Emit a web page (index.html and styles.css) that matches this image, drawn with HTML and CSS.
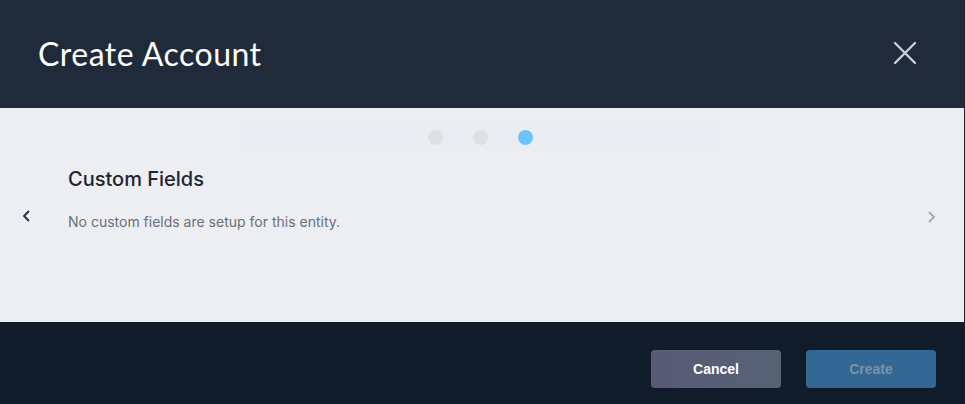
FILE: index.html
```html
<!DOCTYPE html>
<html lang="en">
<head>
<meta charset="UTF-8" />
<title>Create Account</title>
<link rel="stylesheet" href="styles.css">
</head>
<body>
  <div class="modal">
    <!-- Header -->
    <div class="modal-header">
      <h1 class="modal-title">Create Account</h1>
      <button class="close-button" aria-label="Close">
        <svg width="24" height="24" viewBox="0 0 24 24">
          <path d="M2 2 L22 22 M22 2 L2 22" stroke="#c9ced6" stroke-width="2.4" stroke-linecap="round" fill="none"/>
        </svg>
      </button>
    </div>

    <!-- Wizard body -->
    <div class="modal-body">
      <div class="stepper">
        <span class="step-dot"></span>
        <span class="step-dot"></span>
        <span class="step-dot current"></span>
      </div>

      <div class="wizard-row">
        <button class="nav-arrow nav-prev" aria-label="Previous">
          <svg width="12" height="14" viewBox="0 0 12 14">
            <path d="M8 2 L3 7 L8 12" stroke="#1f2b3d" stroke-width="1.8" fill="none"/>
          </svg>
        </button>

        <div class="step-content">
          <h2 class="step-title">Custom Fields</h2>
          <p class="step-text">No custom fields are setup for this entity.</p>
        </div>

        <button class="nav-arrow nav-next" aria-label="Next">
          <svg width="12" height="14" viewBox="0 0 12 14">
            <path d="M4 2 L9 7 L4 12" stroke="#a3a9b3" stroke-width="1.8" fill="none"/>
          </svg>
        </button>
      </div>
    </div>

    <!-- Footer -->
    <div class="modal-footer">
      <button class="btn btn-cancel">Cancel</button>
      <button class="btn btn-create" disabled>Create</button>
    </div>
  </div>
</body>
</html>
```

FILE: styles.css
```css
html, body {
  margin: 0;
  height: 100%;
}

body {
  background: #1b2130;
  font-family: "Inter", "Noto Sans", sans-serif;
}

.modal {
  width: 964px;
  height: 404px;
  display: flex;
  flex-direction: column;
}

.modal-header {
  height: 108px;
  background: #1f2a3b;
  display: flex;
  align-items: center;
  justify-content: space-between;
  padding: 0 38px 2px 38px;
  box-sizing: border-box;
}

.modal-title {
  margin: 0;
  font-family: "Lato", "Noto Sans", sans-serif;
  font-weight: 400;
  font-size: 32px;
  letter-spacing: 0.5px;
  color: #ffffff;
}

.close-button {
  background: none;
  border: none;
  padding: 0;
  margin-right: 9px;
  cursor: pointer;
  display: flex;
}

.modal-body {
  height: 214px;
  background: #eceef2;
  padding-top: 15px;
  box-sizing: border-box;
}

.stepper {
  width: 484px;
  height: 29px;
  margin-left: 238px;
  background: #eaedf1;
  border-radius: 3px;
  display: flex;
  align-items: center;
  justify-content: center;
  gap: 30px;
}

.step-dot {
  width: 15px;
  height: 15px;
  border-radius: 50%;
  background: #dfe0e5;
}

.step-dot.current {
  background: #6cc3fb;
}

.wizard-row {
  display: flex;
  align-items: flex-start;
}

.nav-arrow {
  background: none;
  border: none;
  padding: 0;
  display: flex;
  cursor: pointer;
}

.nav-prev {
  margin: 57px 0 0 21px;
}

.nav-next {
  margin: 58px 27px 0 0;
}

.step-content {
  flex: 1;
  padding-left: 35px;
}

.step-title {
  margin: 15px 0 0 0;
  font-size: 20px;
  font-weight: 500;
  color: #1e2533;
}

.step-text {
  margin: 22px 0 0 0;
  font-size: 14px;
  color: #6b7078;
}

.modal-footer {
  flex: 1;
  background: #111c2b;
  display: flex;
  justify-content: flex-end;
  align-items: flex-start;
  gap: 25px;
  padding: 28px 28px 0 0;
}

.btn {
  width: 130px;
  height: 38px;
  border: none;
  border-radius: 4px;
  font-family: "Liberation Sans", Arial, sans-serif;
  font-weight: bold;
  font-size: 14px;
  cursor: pointer;
}

.btn-cancel {
  background: linear-gradient(90deg, #595a74 0%, #566274 100%);
  color: #ffffff;
}

.btn-create {
  background: #336794;
  color: #7e93a6;
  cursor: default;
}
```
